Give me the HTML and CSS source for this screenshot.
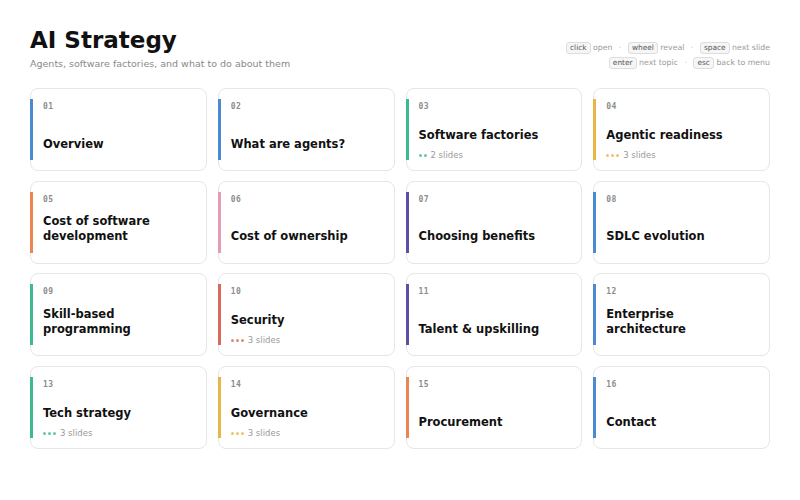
FILE: index.html
```html
<!DOCTYPE html>
<html lang="en">
	<head>
		<meta charset="UTF-8" />
		<meta name="viewport" content="width=device-width, initial-scale=1.0" />
		<title>AI Strategy</title>
		<link rel="stylesheet" href="styles.css">
	</head>
	<body>
		<div class="menu">
			<header class="menu-header">
				<div class="heading">
					<h1>AI Strategy</h1>
					<p class="subtitle">Agents, software factories, and what to do about them</p>
				</div>
				<div class="keys">
					<div class="key-row">
						<kbd>click</kbd> open <span class="sep">·</span>
						<kbd>wheel</kbd> reveal <span class="sep">·</span>
						<kbd>space</kbd> next slide
					</div>
					<div class="key-row">
						<kbd>enter</kbd> next topic <span class="sep">·</span>
						<kbd>esc</kbd> back to menu
					</div>
				</div>
			</header>

			<div class="topics">
				<div class="topic blue">
					<span class="num">01</span>
					<div class="body"><div class="title">Overview</div></div>
				</div>
				<div class="topic blue">
					<span class="num">02</span>
					<div class="body"><div class="title">What are agents?</div></div>
				</div>
				<div class="topic green">
					<span class="num">03</span>
					<div class="body">
						<div class="title">Software factories</div>
						<div class="meta"><span class="dots"><i></i><i></i></span>2 slides</div>
					</div>
				</div>
				<div class="topic amber">
					<span class="num">04</span>
					<div class="body">
						<div class="title">Agentic readiness</div>
						<div class="meta"><span class="dots"><i></i><i></i><i></i></span>3 slides</div>
					</div>
				</div>

				<div class="topic orange">
					<span class="num">05</span>
					<div class="body"><div class="title">Cost of software development</div></div>
				</div>
				<div class="topic pink">
					<span class="num">06</span>
					<div class="body"><div class="title">Cost of ownership</div></div>
				</div>
				<div class="topic purple">
					<span class="num">07</span>
					<div class="body"><div class="title">Choosing benefits</div></div>
				</div>
				<div class="topic blue">
					<span class="num">08</span>
					<div class="body"><div class="title">SDLC evolution</div></div>
				</div>

				<div class="topic green">
					<span class="num">09</span>
					<div class="body"><div class="title">Skill-based programming</div></div>
				</div>
				<div class="topic red">
					<span class="num">10</span>
					<div class="body">
						<div class="title">Security</div>
						<div class="meta"><span class="dots"><i></i><i></i><i></i></span>3 slides</div>
					</div>
				</div>
				<div class="topic purple">
					<span class="num">11</span>
					<div class="body"><div class="title">Talent &amp; upskilling</div></div>
				</div>
				<div class="topic blue">
					<span class="num">12</span>
					<div class="body"><div class="title">Enterprise architecture</div></div>
				</div>

				<div class="topic green">
					<span class="num">13</span>
					<div class="body">
						<div class="title">Tech strategy</div>
						<div class="meta"><span class="dots"><i></i><i></i><i></i></span>3 slides</div>
					</div>
				</div>
				<div class="topic amber">
					<span class="num">14</span>
					<div class="body">
						<div class="title">Governance</div>
						<div class="meta"><span class="dots"><i></i><i></i><i></i></span>3 slides</div>
					</div>
				</div>
				<div class="topic orange">
					<span class="num">15</span>
					<div class="body"><div class="title">Procurement</div></div>
				</div>
				<div class="topic blue">
					<span class="num">16</span>
					<div class="body"><div class="title">Contact</div></div>
				</div>
			</div>
		</div>
	</body>
</html>
```

FILE: styles.css
```css
* {
	box-sizing: border-box;
}
body {
	margin: 0;
	background-color: #fff;
	color: #111;
	font-family: "DejaVu Sans", "Noto Sans", sans-serif;
}
.menu {
	padding: 26px 30px 0;
}
.menu-header {
	display: flex;
	justify-content: space-between;
	align-items: flex-start;
	height: 45px;
	margin-bottom: 17px;
}
h1 {
	margin: 0;
	font-size: 23px;
	line-height: 28px;
	font-weight: bold;
	color: #111;
}
.subtitle {
	margin: 4px 0 0;
	font-size: 9.5px;
	color: #8a8a8a;
}
.keys {
	margin-top: 16px;
	font-size: 7.8px;
	color: #999;
	text-align: right;
}
.key-row {
	margin-bottom: 3px;
	line-height: 12px;
}
kbd {
	display: inline-block;
	font-family: inherit;
	font-size: 7.4px;
	line-height: 10px;
	padding: 0 3px;
	color: #555;
	background-color: #f6f6f6;
	border: 1px solid #ddd;
	border-radius: 3px;
}
.sep {
	margin: 0 4px;
	color: #bbb;
}
.topics {
	display: grid;
	grid-template-columns: repeat(4, 1fr);
	grid-auto-rows: 83px;
	column-gap: 11px;
	row-gap: 9.7px;
}
.topic {
	position: relative;
	display: flex;
	flex-direction: column;
	padding: 12px 12px 10px 12px;
	border: 1px solid #e6e6e6;
	border-radius: 8px;
	background-color: #fff;
}
/* colour bar on the left edge, inset from the corners */
.topic::before {
	content: "";
	position: absolute;
	left: -1px;
	top: 10px;
	bottom: 10px;
	width: 3px;
	background-color: var(--accent);
}
.num {
	font-family: "DejaVu Sans Mono", monospace;
	font-size: 8px;
	line-height: 12px;
	font-weight: bold;
	color: #8c8c8c;
	letter-spacing: 0.5px;
}
.body {
	flex: 1;
	display: flex;
	flex-direction: column;
	justify-content: center;
}
.title {
	display: flex;
	align-items: flex-end;
	min-height: 30px;
	font-size: 11.5px;
	line-height: 15px;
	font-weight: bold;
	color: #111;
}
.meta {
	display: flex;
	align-items: center;
	margin-top: 6px;
	font-size: 8.5px;
	line-height: 12px;
	color: #999;
}
.dots {
	display: inline-flex;
	gap: 2px;
	margin-right: 4px;
}
.dots i {
	width: 3px;
	height: 3px;
	border-radius: 50%;
	background-color: var(--accent);
	opacity: 0.8;
}
.blue {
	--accent: #4a8ad0;
}
.green {
	--accent: #3dbb8c;
}
.amber {
	--accent: #e8b547;
}
.orange {
	--accent: #ec8650;
}
.pink {
	--accent: #e59bb4;
}
.purple {
	--accent: #5e4fa8;
}
.red {
	--accent: #d9685d;
}
```
